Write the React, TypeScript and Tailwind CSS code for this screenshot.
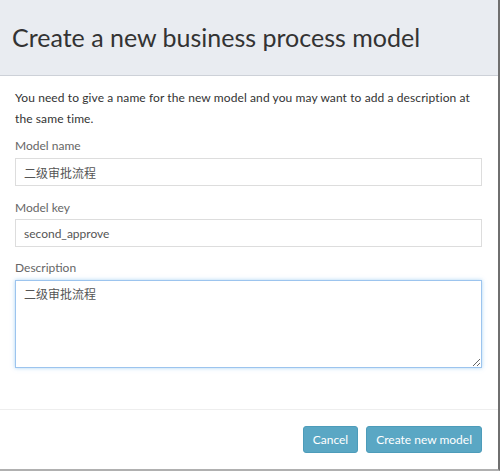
export default function App() {
  const font = { fontFamily: "Lato, 'Noto Sans CJK SC', sans-serif" };
  return (
    <div
      className="flex h-[471px] w-[500px] flex-col border-r-2 border-b-2 border-r-[#6f6f6f] border-b-[#b0b0b0] bg-white text-[#333]"
      style={font}
    >
      <div className="flex h-[76px] items-center border-b border-[#cdd1d8] bg-[#e9ecf1] px-3">
        <h1 className="text-[25px] font-normal leading-none text-[#333]">Create a new business process model</h1>
      </div>
      <div className="flex flex-1 flex-col pt-[11px] pl-[15px] pr-[16px]">
        <p className="text-[12px] leading-[21px] tracking-[0.1px]">
          You need to give a name for the new model and you may want to add a description at the same time.
        </p>
        <label className="mt-[8px] text-[12px] leading-[18px] text-[#666]">Model name</label>
        <input
          readOnly
          value="二级审批流程"
          className="mt-[3px] h-[28px] w-full rounded-none border border-[#ddd] px-[8px] text-[12px] text-[#555] outline-none"
          style={font}
        />
        <label className="mt-[13px] text-[12px] leading-[18px] text-[#666]">Model key</label>
        <input
          readOnly
          value="second_approve"
          className="mt-[2px] h-[28px] w-full rounded-none border border-[#ddd] px-[8px] text-[12px] text-[#555] outline-none"
          style={font}
        />
        <label className="mt-[12px] text-[12px] leading-[18px] text-[#666]">Description</label>
        <textarea
          readOnly
          value="二级审批流程"
          className="mt-[3px] h-[88px] w-full resize-y rounded-none border border-[#9cc4ee] px-[8px] py-[5px] text-[12px] leading-[18px] text-[#555] shadow-[0_0_4px_rgba(102,175,233,0.55)] outline-none"
          style={font}
        />
      </div>
      <div className="flex justify-end gap-[8px] border-t border-[#eeeeee] px-[16px] pt-[16px] pb-[16px]">
        <button className="h-[27px] rounded-[3px] border border-[#4d9cba] bg-[#5aa7c4] px-[9px] text-[12px] text-white">
          Cancel
        </button>
        <button className="h-[27px] rounded-[3px] border border-[#4d9cba] bg-[#5aa7c4] px-[9px] text-[12px] text-white">
          Create new model
        </button>
      </div>
    </div>
  );
}
